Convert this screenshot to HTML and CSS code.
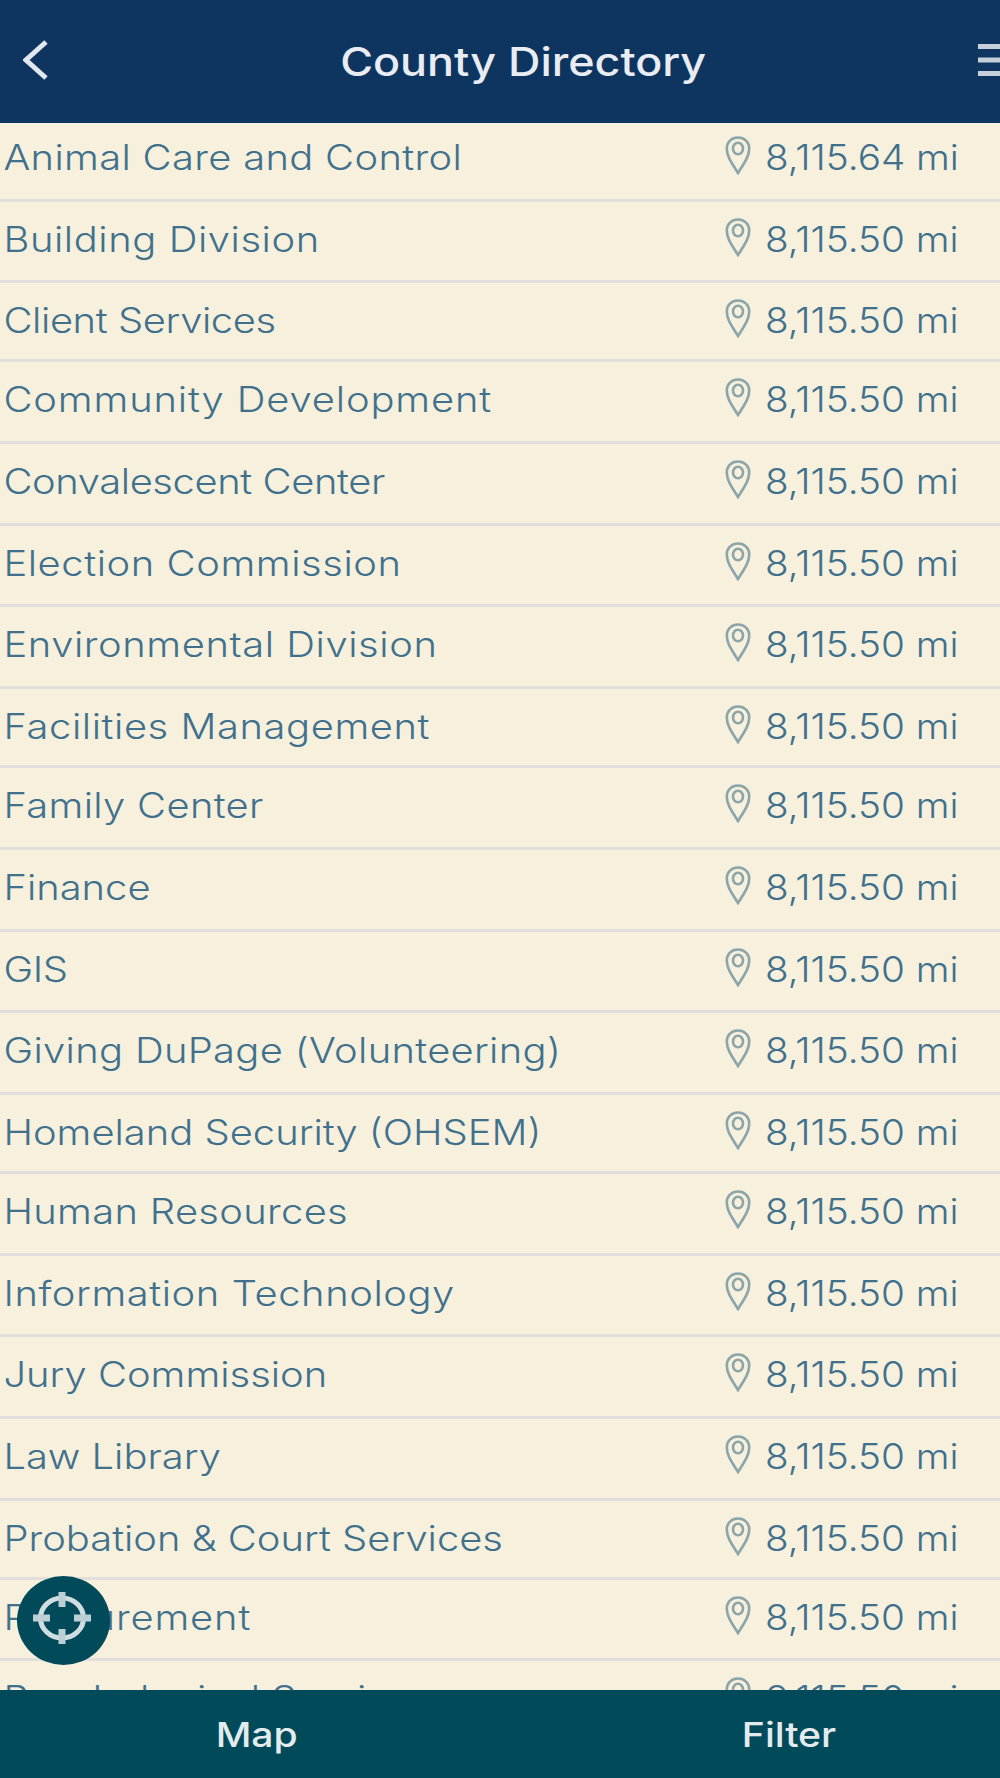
FILE: index.html
```html
<!DOCTYPE html>
<html lang="en">
<head>
    <meta charset="UTF-8">
    <meta name="viewport" content="width=device-width, initial-scale=1.0">
    <title>County Directory</title>
    <link rel="stylesheet" href="styles.css">
</head>
<body>

<svg class="defs" width="0" height="0">
    <symbol id="pin" viewBox="0 0 26 39">
        <path d="M13 1.5C6.5 1.5 1.8 6 1.8 12.5C1.8 21 7.5 28 13 37C18.5 28 24.2 21 24.2 12.5C24.2 6 19.5 1.5 13 1.5Z"/>
        <ellipse cx="13" cy="12.5" rx="5" ry="5.8"/>
    </symbol>
</svg>

<div class="app">
    <header class="header">
        <svg class="back" viewBox="0 0 26 40"><path d="M23 2L3 20L23 38"/></svg>
        <h1><span>County Directory</span></h1>
        <svg class="menu" viewBox="0 0 23 34"><path d="M1 3.5H23M1 17H23M1 30.5H23"/></svg>
    </header>

    <ul class="list">
        <li><span class="name loose">Animal Care and Control</span><svg class="pin"><use href="#pin"/></svg><span class="dist">8,115.64 mi</span></li>
        <li><span class="name wide">Building Division</span><svg class="pin"><use href="#pin"/></svg><span class="dist">8,115.50 mi</span></li>
        <li><span class="name tight">Client Services</span><svg class="pin"><use href="#pin"/></svg><span class="dist">8,115.50 mi</span></li>
        <li><span class="name wider">Community Development</span><svg class="pin"><use href="#pin"/></svg><span class="dist">8,115.50 mi</span></li>
        <li><span class="name tight">Convalescent Center</span><svg class="pin"><use href="#pin"/></svg><span class="dist">8,115.50 mi</span></li>
        <li><span class="name wide">Election Commission</span><svg class="pin"><use href="#pin"/></svg><span class="dist">8,115.50 mi</span></li>
        <li><span class="name wide">Environmental Division</span><svg class="pin"><use href="#pin"/></svg><span class="dist">8,115.50 mi</span></li>
        <li><span class="name wide">Facilities Management</span><svg class="pin"><use href="#pin"/></svg><span class="dist">8,115.50 mi</span></li>
        <li><span class="name loose">Family Center</span><svg class="pin"><use href="#pin"/></svg><span class="dist">8,115.50 mi</span></li>
        <li><span class="name">Finance</span><svg class="pin"><use href="#pin"/></svg><span class="dist">8,115.50 mi</span></li>
        <li><span class="name tight">GIS</span><svg class="pin"><use href="#pin"/></svg><span class="dist">8,115.50 mi</span></li>
        <li><span class="name loose">Giving DuPage (Volunteering)</span><svg class="pin"><use href="#pin"/></svg><span class="dist">8,115.50 mi</span></li>
        <li><span class="name">Homeland Security (OHSEM)</span><svg class="pin"><use href="#pin"/></svg><span class="dist">8,115.50 mi</span></li>
        <li><span class="name loose">Human Resources</span><svg class="pin"><use href="#pin"/></svg><span class="dist">8,115.50 mi</span></li>
        <li><span class="name wide">Information Technology</span><svg class="pin"><use href="#pin"/></svg><span class="dist">8,115.50 mi</span></li>
        <li><span class="name">Jury Commission</span><svg class="pin"><use href="#pin"/></svg><span class="dist">8,115.50 mi</span></li>
        <li><span class="name">Law Library</span><svg class="pin"><use href="#pin"/></svg><span class="dist">8,115.50 mi</span></li>
        <li><span class="name">Probation &amp; Court Services</span><svg class="pin"><use href="#pin"/></svg><span class="dist">8,115.50 mi</span></li>
        <li><span class="name wider">Procurement</span><svg class="pin"><use href="#pin"/></svg><span class="dist">8,115.50 mi</span></li>
        <li><span class="name">Psychological Services</span><svg class="pin"><use href="#pin"/></svg><span class="dist">8,115.50 mi</span></li>
    </ul>

    <button class="locate" aria-label="Locate">
        <svg viewBox="0 0 58 52">
            <ellipse cx="29" cy="26" rx="21.5" ry="20"/>
            <path d="M29 0V15M29 37V52M0 26H17M41 26H58"/>
        </svg>
    </button>

    <nav class="tabs">
        <a><span>Map</span></a>
        <a><span>Filter</span></a>
    </nav>
</div>

</body>
</html>
```
FILE: styles.css
```css
* {
    box-sizing: border-box;
}

body {
    margin: 0;
    font-family: Inter, "Open Sans", sans-serif;
    background-color: #f6f0dc;
}

.defs {
    position: absolute;
}

.app {
    position: relative;
    display: flex;
    flex-direction: column;
    height: 1778px;
    overflow: hidden;
}

.header {
    display: flex;
    align-items: center;
    flex: none;
    height: 123px;
    padding-left: 23px;
    background-color: #0d3560;
    color: #e9edf3;
    z-index: 1;
}

.header svg {
    flex: none;
    fill: none;
    stroke: #e2e7ee;
    stroke-width: 5;
}

.back {
    width: 26px;
    height: 40px;
    margin-bottom: 3px;
}

.header h1 {
    flex: 1;
    margin: 0;
    padding-left: 20px;
    font-size: 39px;
    font-weight: 500;
    text-align: center;
}

.header h1 span {
    display: inline-block;
    transform: scaleX(1.15);
}

.header .menu {
    width: 23px;
    height: 34px;
    margin-bottom: 3px;
    stroke: #c6d0dc;
}

.list {
    flex: 1;
    min-height: 0;
    margin: -3px 0 0;
    padding: 0;
    list-style: none;
    overflow: hidden;
}

.list li {
    display: flex;
    align-items: flex-start;
    height: 81.7px;
    padding-top: 16px;
    border-bottom: 3px solid #e0dfdc;
    font-size: 35px;
    font-weight: 300;
    line-height: 43px;
    color: #41708d;
    white-space: nowrap;
}

.list li:nth-child(5n+3) {
    height: 79px;
}

.name {
    width: 721px;
    padding-left: 3px;
    transform: scaleX(1.14);
    transform-origin: left;
}

/* letter spacing per name */
.tight {
    letter-spacing: -0.35px;
}

.loose {
    letter-spacing: 0.28px;
}

.wide {
    letter-spacing: 0.5px;
}

.wider {
    letter-spacing: 0.75px;
}

.pin {
    flex: none;
    width: 26px;
    height: 39px;
    margin-left: 4px;
    fill: none;
    stroke: #8ba5ab;
    stroke-width: 2.6;
}

.dist {
    margin-left: 14px;
    transform: scaleX(1.105);
    transform-origin: left;
}

.locate {
    position: absolute;
    left: 17px;
    top: 1576px;
    width: 93px;
    height: 89px;
    padding: 0 0 6px;
    border: none;
    border-radius: 50%;
    background-color: #004a59;
}

.locate svg {
    display: block;
    width: 58px;
    height: 52px;
    margin: 0 auto 0 16px;
    fill: none;
    stroke: #d0dde1;
    stroke-width: 5;
}

.locate path {
    stroke: #bccfd4;
    stroke-width: 7;
}

.tabs {
    display: flex;
    flex: none;
    height: 88px;
    margin-left: -10px;
    padding-left: 0;
    background-color: #004a59;
    color: #e3ebee;
    font-size: 34px;
    font-weight: 500;
    line-height: 89px;
}

.tabs a {
    flex: none;
    width: 533px;
    text-align: center;
}

.tabs span {
    display: inline-block;
    transform: scaleX(1.15);
}
```
